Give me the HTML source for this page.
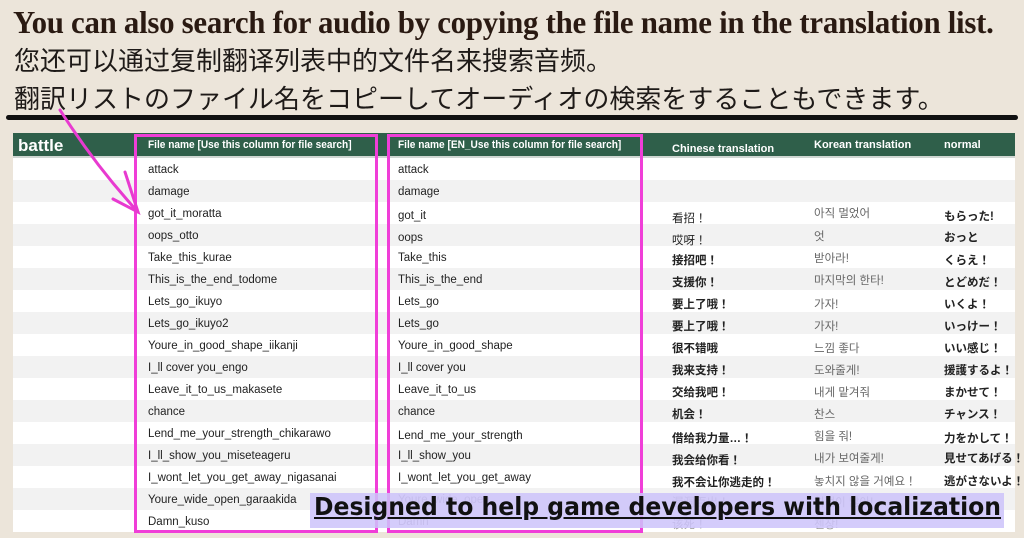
<!DOCTYPE html>
<html><head><meta charset="utf-8"><style>
*{margin:0;padding:0;box-sizing:border-box}
body{width:1024px;height:538px;overflow:hidden;background:#ece5da;font-family:"Liberation Sans","Noto Sans CJK JP",sans-serif;position:relative}
.t{position:absolute;white-space:nowrap}
#title{left:13px;top:4px;font-family:"Liberation Serif",serif;font-weight:bold;font-size:32px;color:#2a1a12;transform:scaleX(0.965);transform-origin:left top;letter-spacing:-0.3px}
.cj{font-family:"Liberation Sans","Noto Sans CJK SC",sans-serif;font-size:26px;color:#1e1a18}
#bar{position:absolute;left:6px;top:115px;width:1012px;height:5px;background:#111;border-radius:3px}
#hdr{position:absolute;left:13px;top:133px;width:1002px;height:25px;background:#2f5f4a;border-bottom:2px solid #cfd6d2}
.h{position:absolute;color:#fff;font-weight:bold;font-size:11px;white-space:nowrap}
.row{position:absolute;left:13px;width:1002px;height:22px;font-size:11.5px;color:#222}
.row span{position:absolute;top:6px;white-space:nowrap}
.box{position:absolute;border:3px solid #f03ed8}
</style></head><body>
<div id="title" class="t">You can also search for audio by copying the file name in the translation list.</div>
<div class="t cj" style="left:14px;top:41px">您还可以通过复制翻译列表中的文件名来搜索音频。</div>
<div class="t cj" style="left:14px;top:79px;font-size:26px;font-family:'Liberation Sans','Noto Sans CJK JP',sans-serif">翻訳リストのファイル名をコピーしてオーディオの検索をすることもできます。</div>
<div id="bar"></div>
<div id="hdr">
<div class="h" style="left:5px;top:3px;font-size:17px">battle</div>
<div class="h" style="left:135px;top:6px;transform:scaleX(0.92);transform-origin:left">File name [Use this column for file search]</div>
<div class="h" style="left:385px;top:6px;transform:scaleX(0.92);transform-origin:left">File name [EN_Use this column for file search]</div>
<div class="h" style="left:659px;top:10px">Chinese translation</div>
<div class="h" style="left:801px;top:6px">Korean translation</div>
<div class="h" style="left:931px;top:6px">normal</div>
</div>
<div class="row" style="top:158px;background:#fff"><span style="left:135px">attack</span><span style="left:385px">attack</span></div>
<div class="row" style="top:180px;background:#f2f2f2"><span style="left:135px">damage</span><span style="left:385px">damage</span></div>
<div class="row" style="top:202px;background:#fff"><span style="left:135px">got_it_moratta</span><span style="left:385px;top:8px">got_it</span><span style="left:659px;top:8px">看招！</span><span style="left:801px;top:3px;color:#666">아직 멀었어</span><span style="left:931px;font-weight:bold">もらった!</span></div>
<div class="row" style="top:224px;background:#f2f2f2"><span style="left:135px">oops_otto</span><span style="left:385px;top:8px">oops</span><span style="left:659px;top:8px">哎呀！</span><span style="left:801px;top:4px;color:#666">엇</span><span style="left:931px;top:5px;font-weight:bold">おっと</span></div>
<div class="row" style="top:246px;background:#fff"><span style="left:135px">Take_this_kurae</span><span style="left:385px">Take_this</span><span style="left:659px;font-weight:bold">接招吧！</span><span style="left:801px;top:4px;color:#666">받아라!</span><span style="left:931px;font-weight:bold">くらえ！</span></div>
<div class="row" style="top:268px;background:#f2f2f2"><span style="left:135px">This_is_the_end_todome</span><span style="left:385px">This_is_the_end</span><span style="left:659px;font-weight:bold">支援你！</span><span style="left:801px;top:4px;color:#666">마지막의 한타!</span><span style="left:931px;font-weight:bold">とどめだ！</span></div>
<div class="row" style="top:290px;background:#fff"><span style="left:135px">Lets_go_ikuyo</span><span style="left:385px">Lets_go</span><span style="left:659px;font-weight:bold">要上了哦！</span><span style="left:801px;color:#666">가자!</span><span style="left:931px;font-weight:bold">いくよ！</span></div>
<div class="row" style="top:312px;background:#f2f2f2"><span style="left:135px">Lets_go_ikuyo2</span><span style="left:385px">Lets_go</span><span style="left:659px;font-weight:bold">要上了哦！</span><span style="left:801px;color:#666">가자!</span><span style="left:931px;font-weight:bold">いっけー！</span></div>
<div class="row" style="top:334px;background:#fff"><span style="left:135px">Youre_in_good_shape_iikanji</span><span style="left:385px">Youre_in_good_shape</span><span style="left:659px;font-weight:bold">很不错哦</span><span style="left:801px;color:#666">느낌 좋다</span><span style="left:931px;font-weight:bold">いい感じ！</span></div>
<div class="row" style="top:356px;background:#f2f2f2"><span style="left:135px">I_ll cover you_engo</span><span style="left:385px">I_ll cover you</span><span style="left:659px;font-weight:bold">我来支持！</span><span style="left:801px;color:#666">도와줄게!</span><span style="left:931px;font-weight:bold">援護するよ！</span></div>
<div class="row" style="top:378px;background:#fff"><span style="left:135px">Leave_it_to_us_makasete</span><span style="left:385px">Leave_it_to_us</span><span style="left:659px;font-weight:bold">交给我吧！</span><span style="left:801px;color:#666">내게 맡겨줘</span><span style="left:931px;font-weight:bold">まかせて！</span></div>
<div class="row" style="top:400px;background:#f2f2f2"><span style="left:135px">chance</span><span style="left:385px">chance</span><span style="left:659px;font-weight:bold">机会！</span><span style="left:801px;color:#666">찬스</span><span style="left:931px;font-weight:bold">チャンス！</span></div>
<div class="row" style="top:422px;background:#fff"><span style="left:135px">Lend_me_your_strength_chikarawo</span><span style="left:385px;top:8px">Lend_me_your_strength</span><span style="left:659px;top:8px;font-weight:bold">借给我力量…！</span><span style="left:801px;color:#666">힘을 줘!</span><span style="left:931px;top:8px;font-weight:bold">力をかして！</span></div>
<div class="row" style="top:444px;background:#f2f2f2"><span style="left:135px">I_ll_show_you_miseteageru</span><span style="left:385px">I_ll_show_you</span><span style="left:659px;top:8px;font-weight:bold">我会给你看！</span><span style="left:801px;color:#666">내가 보여줄게!</span><span style="left:931px;font-weight:bold">見せてあげる！</span></div>
<div class="row" style="top:466px;background:#fff"><span style="left:135px">I_wont_let_you_get_away_nigasanai</span><span style="left:385px">I_wont_let_you_get_away</span><span style="left:659px;top:8px;font-weight:bold">我不会让你逃走的！</span><span style="left:801px;top:7px;color:#666">놓치지 않을 거예요！</span><span style="left:931px;top:7px;font-weight:bold">逃がさないよ！</span></div>
<div class="row" style="top:488px;background:#f2f2f2"><span style="left:135px">Youre_wide_open_garaakida</span><span style="left:385px;color:#999">Youre_wide_open</span><span style="left:659px;color:#999">漏洞百出！</span><span style="left:801px;color:#999">허점이 많아!</span></div>
<div class="row" style="top:510px;background:#fff;height:22px"><span style="left:135px">Damn_kuso</span><span style="left:385px;color:#999">Damn</span><span style="left:659px;color:#999">该死！</span><span style="left:801px;color:#999">젠장!</span></div>
<div class="box" style="left:134px;top:134px;width:244px;height:399px"></div>
<div class="box" style="left:387px;top:134px;width:256px;height:399px"></div>
<div class="t" style="left:310px;top:493px;width:694px;height:35px;background:rgba(205,195,250,0.85)"></div>
<div class="t" style="left:314px;top:492px;font-family:'DejaVu Sans',sans-serif;font-weight:bold;font-size:25px;color:#111;text-decoration:underline;transform:scaleX(0.94);transform-origin:left top">Designed to help game developers with localization</div>
<svg style="position:absolute;left:0;top:0" width="1024" height="538">
<path d="M60 110 Q95 165 138 212" stroke="#e83ad0" stroke-width="3" fill="none" stroke-linecap="round"/>
<path d="M125 172 L138 212 L113 199" stroke="#e83ad0" stroke-width="3" fill="none" stroke-linecap="round"/>
</svg>
</body></html>
